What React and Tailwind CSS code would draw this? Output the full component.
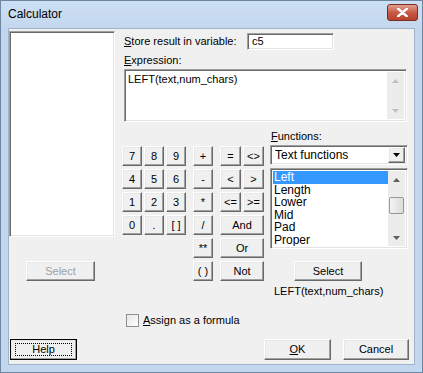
import React from 'react';

const font = { fontFamily: '"Liberation Sans", Arial, sans-serif' };

const Btn = ({ children, className = '', disabled = false }) => (
  <div
    className={`flex items-center justify-center border border-t-white border-l-white border-r-[#696969] border-b-[#696969] bg-[#f0f0f0] shadow-[inset_-1px_-1px_0_#a0a0a0,inset_1px_1px_0_#e8e8e8] text-[11px] leading-none ${
      disabled ? 'text-[#a0a0a0]' : 'text-black'
    } ${className}`}
  >
    {children}
  </div>
);

const Sunken = ({ children, className = '' }) => (
  <div
    className={`border border-t-[#a0a0a0] border-l-[#a0a0a0] border-r-white border-b-white bg-white shadow-[inset_1px_1px_0_#696969,inset_-1px_-1px_0_#e3e3e3] ${className}`}
  >
    {children}
  </div>
);

const Arrow = ({ up, color }) => (
  <svg width="7" height="4" viewBox="0 0 7 4">
    <path d={up ? 'M0 4 L3.5 0 L7 4 Z' : 'M0 0 L3.5 4 L7 0 Z'} fill={color} />
  </svg>
);

const ScrollBar = ({ disabled, thumb }) => (
  <div className="flex w-[17px] flex-col bg-[#ececec]">
    <div className="flex h-[17px] items-center justify-center">
      <Arrow up color={disabled ? '#c0c0c0' : '#606060'} />
    </div>
    <div className="flex-1">
      {thumb && (
        <div className="mx-[1px] mt-[9px] h-[17px] rounded-[2px] border border-[#979797] bg-gradient-to-r from-[#f3f3f3] to-[#dcdcdc]" />
      )}
    </div>
    <div className="flex h-[17px] items-center justify-center">
      <Arrow color={disabled ? '#c0c0c0' : '#606060'} />
    </div>
  </div>
);

const Key = ({ label, w = 'w-[20px]' }) => (
  <Btn className={`${w} h-[20px]`}>{label}</Btn>
);

const rows = [
  { digits: ['7', '8', '9'], op: '+', right: ['=', '<>'] },
  { digits: ['4', '5', '6'], op: '-', right: ['<', '>'] },
  { digits: ['1', '2', '3'], op: '*', right: ['<=', '>='] },
  { digits: ['0', '.', '[ ]'], op: '/', right: ['And'] },
  { digits: null, op: '**', right: ['Or'] },
  { digits: null, op: '( )', right: ['Not'] },
];

const funcs = ['Left', 'Length', 'Lower', 'Mid', 'Pad', 'Proper'];

export default function App() {
  return (
    <div
      className="flex h-[373px] w-[423px] flex-col border border-[#6d87a3] bg-[#c2d7ee]"
      style={font}
    >
      {/* Title bar */}
      <div className="flex h-[27px] items-center bg-gradient-to-b from-[#cddff3] to-[#c3d7ee] pb-[2px] pl-[7px] pr-[4px]">
        <span className="text-[12px] text-black">Calculator</span>
        <div className="ml-auto mt-[-2px] flex h-[17px] w-[31px] items-center justify-center rounded-[3px] border border-[#7a2a1f] bg-gradient-to-b from-[#e0a092] via-[#c75a45] to-[#b8412c]">
          <svg width="11" height="9" viewBox="0 0 11 9">
            <path d="M1 0.5 L10 8.5 M10 0.5 L1 8.5" stroke="#fff" strokeWidth="2.4" strokeLinecap="round" />
          </svg>
        </div>
      </div>

      {/* Client area */}
      <div className="ml-[7px] h-[337px] w-[407px] border border-[#9fb3c9] bg-[#f0f0f0] text-[11px] text-black">
        <div className="flex pt-[2px]">
          {/* Left column */}
          <div className="flex w-[106px] flex-col">
            <Sunken className="h-[206px]" />
            <Btn disabled className="ml-[17px] mt-[24px] h-[20px] w-[69px]">
              Select
            </Btn>
          </div>

          {/* Right column */}
          <div className="ml-[9px] flex flex-col">
            <div className="mt-[2px] flex h-[17px] items-center">
              <span className="w-[123px] leading-[13px]">
                <span className="underline">S</span>tore result in variable:
              </span>
              <Sunken className="flex h-[17px] w-[87px] items-center pl-[4px] leading-none">
                c5
              </Sunken>
            </div>
            <div className="mt-[4px] h-[13px] leading-[13px]">
              <span className="underline">E</span>xpression:
            </div>
            <Sunken className="mt-[2px] flex h-[53px] w-[283px] p-[2px]">
              <div className="flex-1 pl-[1px] pt-[1px] leading-[13px]">LEFT(text,num_chars)</div>
              <ScrollBar disabled />
            </Sunken>

            <div className="mt-[8px] flex">
              {/* Keypad */}
              <div className="-ml-[2px] mt-[16px] flex flex-col gap-[3px]">
                {rows.map((r, i) => (
                  <div key={i} className="flex">
                    <div className="flex w-[64px] gap-[2px]">
                      {r.digits && r.digits.map((d) => <Key key={d} label={d} />)}
                    </div>
                    <div className="ml-[7px]">
                      <Key label={r.op} />
                    </div>
                    <div className="ml-[7px] flex w-[44px] gap-[2px]">
                      {r.right.length === 2 ? (
                        r.right.map((d) => <Key key={d} label={d} w="w-[21px]" />)
                      ) : (
                        <Key label={r.right[0]} w="w-[44px]" />
                      )}
                    </div>
                  </div>
                ))}
              </div>

              {/* Functions */}
              <div className="ml-[6px] flex w-[138px] flex-col">
                <div className="h-[13px] pl-[1px] leading-[13px]">
                  <span className="underline">F</span>unctions:
                </div>
                <Sunken className="mt-[2px] flex h-[20px] items-center p-[2px]">
                  <div className="flex-1 pl-[2px] text-[12px] leading-none">Text functions</div>
                  <Btn className="h-[16px] w-[17px]">
                    <svg width="7" height="4" viewBox="0 0 7 4">
                      <path d="M0 0 L3.5 4 L7 0 Z" fill="#000" />
                    </svg>
                  </Btn>
                </Sunken>
                <Sunken className="mt-[3px] flex h-[81px] p-[2px]">
                  <div className="flex-1 overflow-hidden">
                    {funcs.map((f, i) => (
                      <div
                        key={f}
                        className={`h-[12.5px] pl-[1px] text-[12px] leading-[12.5px] ${i === 0 ? 'bg-[#3399ff] text-white' : ''}`}
                      >
                        {f}
                      </div>
                    ))}
                  </div>
                  <ScrollBar thumb />
                </Sunken>
                <Btn className="ml-[24px] mt-[12px] h-[20px] w-[68px]">Select</Btn>
                <div className="ml-[4px] mt-[4px] h-[13px] leading-[13px]">LEFT(text,num_chars)</div>
              </div>
            </div>
          </div>
        </div>

        {/* Assign checkbox */}
        <div className="ml-[117px] mt-[15px] flex h-[14px] items-center">
          <div className="h-[13px] w-[13px] border border-[#8f8f8f] bg-gradient-to-br from-[#e6e6e6] to-white" />
          <span className="ml-[4px] leading-[13px]">
            <span className="underline">A</span>ssign as a formula
          </span>
        </div>

        {/* Bottom buttons */}
        <div className="ml-[1px] mt-[12px] flex">
          <div className="h-[21px] w-[67px] border border-black">
            <Btn className="h-full w-full border-0">
              <div className="flex h-[13px] w-[57px] items-center justify-center border border-dotted border-black">
                Help
              </div>
            </Btn>
          </div>
          <Btn className="ml-[187px] h-[21px] w-[67px]">
            <span>
              <span className="underline">O</span>K
            </span>
          </Btn>
          <Btn className="ml-[12px] h-[21px] w-[66px]">Cancel</Btn>
        </div>
      </div>
    </div>
  );
}
